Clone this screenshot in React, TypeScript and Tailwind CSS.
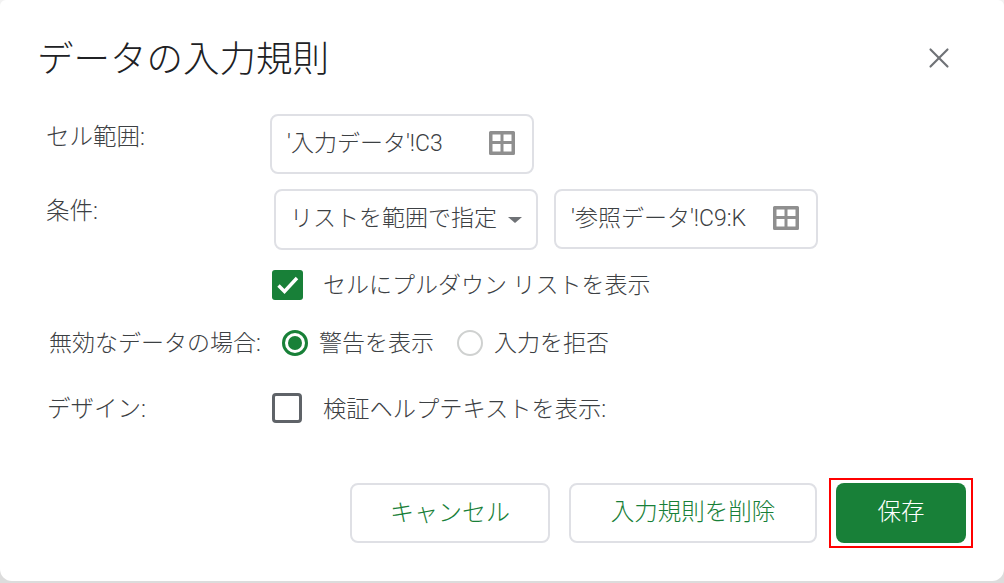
import { X } from "lucide-react";

const fontStack = "font-['Roboto','Noto_Sans_CJK_JP',sans-serif]";

function GridIcon() {
  return (
    <svg width="26" height="24" viewBox="0 0 26 24" className="mb-[2px] shrink-0">
      <path
        fillRule="evenodd"
        d="M1.500 0h23A1.500 1.500 0 0 1 26 1.500v21a1.500 1.500 0 0 1-1.500 1.500h-23A1.500 1.500 0 0 1 0 22.500v-21A1.500 1.500 0 0 1 1.500 0ZM3.500 3.500v6.500h8v-6.500h-8Zm11 0v6.500h8v-6.500h-8ZM3.500 13v7.500h8V13h-8Zm11 0v7.500h8V13h-8Z"
        fill="#8f8f8f"
      />
    </svg>
  );
}

function RangeBox({ text, className }: { text: string; className: string }) {
  return (
    <div className={`flex h-[60px] items-center justify-between rounded-lg border-2 border-[#dfe0e5] bg-white pl-[15px] pr-[17px] text-[23px] font-light text-[#3c4043] ${className}`}>
      <span>{text}</span>
      <GridIcon />
    </div>
  );
}

export default function App() {
  return (
    <div className={`h-[583px] w-[1004px] overflow-hidden bg-[linear-gradient(to_bottom,#f2f2f2_90%,#dcdcdc_90%)] ${fontStack}`}>
      <div className="flex h-[581px] flex-col rounded-b-xl rounded-t-md bg-white">
        <div className="flex h-[114px] items-start justify-between pl-[37px] pr-[48px] pt-[36px]">
          <h1 className="text-[36.500px] font-light leading-[48px] text-[#202124]">データの入力規則</h1>
          <X size={34} strokeWidth={1.500} className="mt-[5px] text-[#6f7276]" />
        </div>

        <div className="flex h-[75px] items-start pl-[46px]">
          <div className="w-[224px] pt-[7px] text-[23.500px] font-light leading-[32px] text-[#3c4043]">セル範囲:</div>
          <RangeBox text="'入力データ'!C3" className="w-[264px]" />
        </div>

        <div className="flex h-[81px] items-start pl-[46px]">
          <div className="w-[228px] pt-[6px] text-[23.500px] font-light leading-[32px] text-[#3c4043]">条件:</div>
          <div className="flex h-[61px] w-[264px] items-center justify-between rounded-lg border-2 border-[#dfe0e5] bg-white pl-[14px] pr-[14px] text-[23px] font-light text-[#3c4043]">
            <span>リストを範囲で指定</span>
            <span className="h-0 w-0 border-x-[7px] border-t-[6px] border-x-transparent border-t-[#6f7276]" />
          </div>
          <RangeBox text="'参照データ'!C9:K" className="ml-4 w-[264px]" />
        </div>

        <div className="flex h-[50px] items-start pl-[272px]">
          <span className="flex h-[30px] w-[31px] items-center justify-center rounded-[3px] bg-[#188038]">
            <svg width="24" height="20" viewBox="0 0 24 20">
              <path d="M2.500 10.500 8.500 16.500 21 3" fill="none" stroke="white" strokeWidth="3.400" />
            </svg>
          </span>
          <span className="ml-[20px] pt-[1px] text-[23px] font-light leading-[30px] text-[#3c4043]">セルにプルダウン リストを表示</span>
        </div>

        <div className="flex h-[70px] items-start pl-[49px] pt-[7px] text-[23px] font-light leading-[32px] text-[#3c4043]">
          <span className="w-[233px] pt-[1px]">無効なデータの場合:</span>
          <span className="mt-[3px] flex h-[26px] w-[26px] items-center justify-center rounded-full border-[3px] border-[#188038]">
            <span className="h-[14px] w-[14px] rounded-full bg-[#188038]" />
          </span>
          <span className="ml-[11px] pt-[1px]">警告を表示</span>
          <span className="ml-[23px] mt-[3px] h-[26px] w-[26px] rounded-full border-2 border-[#cfd1d0]" />
          <span className="ml-[11px] pt-[1px]">入力を拒否</span>
        </div>

        <div className="flex h-[92px] items-start pl-[47px] pt-[3px] text-[23.500px] font-light leading-[32px] text-[#3c4043]">
          <span className="w-[225px]">デザイン:</span>
          <span className="flex h-[30px] w-[30px] rounded-[4px] border-[3px] border-[#5f6368]" />
          <span className="ml-[21px] text-[23.250px]">検証ヘルプテキストを表示:</span>
        </div>

        <div className="flex justify-end pr-[38px] pt-[1px]">
          <button className="h-[60px] w-[200px] rounded-lg border-2 border-[#dfe0e5] bg-white text-[24px] font-light text-[#188038]">キャンセル</button>
          <button className="ml-[19px] h-[60px] w-[248px] rounded-lg border-2 border-[#dfe0e5] bg-white text-[23.500px] font-light text-[#188038]">入力規則を削除</button>
          <div className="relative ml-[19px]">
            <button className="h-[60px] w-[130px] rounded-lg bg-[#188038] text-[23.500px] font-light text-white">保存</button>
            <span className="absolute -bottom-[5px] -left-[7px] -right-[7px] -top-[5px] border-2 border-[#ff0000]" />
          </div>
        </div>
      </div>
    </div>
  );
}
